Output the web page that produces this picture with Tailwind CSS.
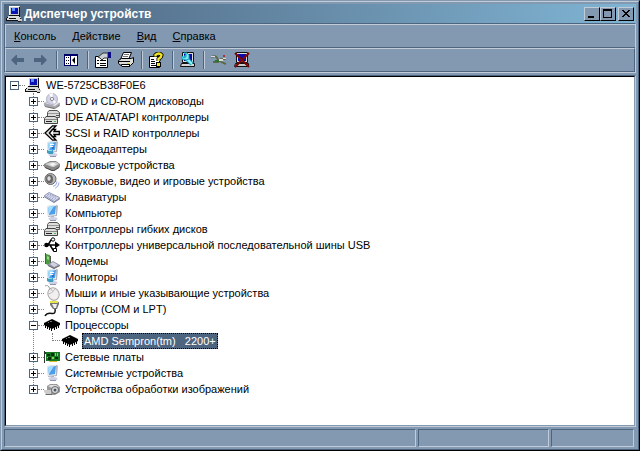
<!DOCTYPE html>
<html lang="ru">
<head>
  <meta charset="UTF-8">
  <title>Диспетчер устройств</title>
  <meta name="viewport" content="width=device-width, initial-scale=1">
  <script src="https://cdn.jsdelivr.net/npm/@tailwindcss/browser@4"></script>
</head>
<body class="font-['Liberation_Sans',Arial,sans-serif] text-[11px] text-black">

  <!-- Icon set -->
  <svg class="hidden" xmlns="http://www.w3.org/2000/svg">
    <symbol id="pc" viewBox="0 0 16 16">
      <path fill="#c6cbd0" d="M3 0h11v10H3z"/><path fill="#fff" d="M3 0h10v1H3zM3 0h1v9H3z"/><path fill="#111" d="M13 1h1v9H3V9h10z"/>
      <path fill="#0a12b4" d="M5 2h7v6H5z"/><path fill="#5c8cff" d="M6 2h3v3H6z"/>
      <path fill="#d8dcdf" d="M2 10h11v2H2zM1 12h12v2H1z"/><path fill="#111" d="M1 11h1v1H1zM0 12h1v3H0zM1 14h13v1H1zM3 12h7v1H3zM13 10h1v2h-1z"/>
      <path fill="#ccc" d="M12 11h3v2h1v2h-2v1h-2v-2h1z"/><path fill="#222" d="M14 12h1v1h-1zM12 15h3v1h-3z"/>
    </symbol>
    <symbol id="cd" viewBox="0 0 16 16">
      <path fill="#a8a8b0" d="M0 10l4-2 12 2v3l-5 3-11-3z"/><path fill="#e8e8ec" d="M1 10l4-1 10 1-4 3z"/><path fill="#777" d="M1 13l10 2 4-3v1l-5 3-9-2z"/>
      <ellipse cx="8" cy="6" rx="5.500" ry="5.500" fill="#d4d2e6" stroke="#b4b4c6"/><path fill="#fff" d="M8 6l-3-5 4-1zM8 6l2 5 2-2z"/><circle cx="8" cy="6" r="1.600" fill="#fff" stroke="#888"/>
    </symbol>
    <symbol id="drives" viewBox="0 0 16 16">
      <path fill="#ddd" stroke="#555" d="M5 1.500h8l2.500 2v5h-12v-5z"/><path fill="#999" d="M4 4h11v1H4z"/><path fill="#555" d="M12 6h3v1h-3z"/>
      <path fill="#ddd" stroke="#444" d="M2 7.500h9l2.500 2v5H.5v-5z"/><path fill="#888" d="M1 10h12v1H1z"/><path fill="#222" d="M2 12h6v1H2z"/><path fill="#3c3" d="M10 12h2v1h-2z"/>
    </symbol>
    <symbol id="scsi" viewBox="0 0 16 16">
      <path fill="#ddd" stroke="#000" stroke-width="1.300" d="M8.500.8h3.500L5.500 8l6.500 7.200H8.500L1 8z"/><path fill="#fff" stroke="#000" stroke-width="1.300" d="M15.300 6.500H10l1.500-2h-3L5.500 8l3 3.500h3l-1.500-2h5.300z"/>
    </symbol>
    <symbol id="monitor" viewBox="0 0 16 16">
      <path fill="#b4b8c4" d="M3 1l10-1 1 1-1 10-9 1z"/><path fill="#e9edf3" d="M3 1l9-1v10l-8 1z"/><path fill="#4a9eec" d="M4 2l8-1-1 8-6 1z"/><path fill="#a4defc" d="M4 2l6-1-5 8z"/>
      <path fill="#b0b5c6" d="M7 11h3v2H7z"/><ellipse cx="9" cy="13.800" rx="4.500" ry="1.700" fill="#cdd1e4"/><path fill="#9093b8" d="M6 15h6v1H6z"/>
    </symbol>
    <symbol id="video" viewBox="0 0 16 16">
      <use href="#monitor"/><path fill="#fff" d="M6 3h4v1H6zM6 5h3v1H6z"/><path fill="#2f6fc0" d="M8 6h2v2H8z"/><path fill="#3e9cc4" d="M3 9h6v4H5l-2-1z"/><path fill="#8fe0ee" d="M4 9h4v1H4z"/>
    </symbol>
    <symbol id="disk" viewBox="0 0 16 16">
      <path fill="#888" d="M0 7l6-3h6l4 3v3l-6 4H8L0 10z"/><path fill="#ccc" d="M1 7l6-2h5l3 2-5 3H8z"/><path fill="#f8f8f8" d="M5 7l4-1 3 1-3 2z"/><path fill="#444" d="M1 10l7 3h2l5-3v1l-5 3H8l-7-3z"/>
    </symbol>
    <symbol id="sound" viewBox="0 0 16 16">
      <ellipse cx="6.500" cy="6" rx="5.500" ry="5.500" fill="#b8b8b8" stroke="#666"/><ellipse cx="5.500" cy="6" rx="3.500" ry="4.300" fill="#666"/><ellipse cx="5" cy="5.500" rx="1.700" ry="2.300" fill="#ddd"/>
      <path fill="none" stroke="#9caae4" d="M9 13.500q4-1 4-5M11 15.500q4-2 4-6"/>
    </symbol>
    <symbol id="keyboard" viewBox="0 0 16 16">
      <path fill="#d9dcf0" stroke="#9698b6" d="M.5 6.500L5 3.500l10.500 5-5 4z"/><path fill="none" stroke="#8a8fb8" stroke-dasharray="1 1" d="M3 6l8 5M4 5l8 4.500M6 5l7 3.500"/><path fill="#666b91" d="M0 7l10 6 6-4v1l-6 4L0 8z"/>
    </symbol>
    <symbol id="usb" viewBox="0 0 16 16">
      <path fill="none" stroke="#000" stroke-width="1.500" d="M2 8h12M4 8l3-5h2M6 8l3 5h2"/><circle cx="2.500" cy="8" r="2.300" fill="#000"/><path d="M11 4.500L16 8l-5 3.500z"/><circle cx="9" cy="2.500" r="1.700" fill="#fff" stroke="#000"/><path fill="#fff" stroke="#000" d="M9.500 11.500h3v3h-3z"/>
    </symbol>
    <symbol id="modem" viewBox="0 0 16 16">
      <path fill="#4b9b3f" d="M2 1l4 1v11l-4-2z"/><path fill="#9bdd7a" d="M3 3l2 1v3L3 6z"/><path fill="#555" d="M1 0h1v11H1zM6 3h1v8H6z"/>
      <path fill="#9093a6" d="M3 12l6-4 7 4-6 4z"/><path fill="#d2d4e2" d="M6 11l3-2 5 3-4 2z"/><path fill="#666" d="M4 12l6 3 6-3v1l-6 3-6-3z"/>
    </symbol>
    <symbol id="mouse" viewBox="0 0 16 16">
      <path fill="none" stroke="#999" d="M1 1q3-2 5 3"/><ellipse cx="9.500" cy="9" rx="5.500" ry="6.300" fill="#f1f0ee" stroke="#aaa" transform="rotate(-25 9.500 9)"/><path fill="none" stroke="#bbb" d="M4 9q4 0 7-5M7 4l2 3"/>
    </symbol>
    <symbol id="port" viewBox="0 0 16 16">
      <path fill="#777" d="M6 1h9v2l-2 5H9L6 4z"/><path fill="#e6e64a" d="M6 0h8v2H6z"/><path fill="#eee" d="M8 3h5l-1 4h-2z"/><path fill="none" stroke="#111" stroke-width="1.500" d="M11 8q1 5-3 4.500-5-1-7 2.500"/>
    </symbol>
    <symbol id="chip" viewBox="0 0 16 16">
      <path d="M0 6l8-4 8 4v2l-8 4L0 8z"/><path fill="none" stroke="#000" d="M1.500 8v3M3.500 9v3M5.500 10v3M7.500 11v3M10.500 10v3M12.500 9v3M14.500 8v3"/><path fill="#777" d="M6 4h2v1H6zM4 5h1v1H4z"/>
    </symbol>
    <symbol id="netcard" viewBox="0 0 16 16">
      <path fill="#167a22" d="M2 3h14v9H2z"/><path fill="#333" d="M0 2h1v12H0zM1 3h1v2H1z"/><path fill="#092e0e" d="M3 5h3v2H3zM7 4h3v3H7zM4 8h3v3H4zM11 8h3v2h-3z"/><path fill="#7ed957" d="M11 4h1v3h-1zM13 4h1v3h-1zM8 8h2v2H8zM3 8h1v1H3z"/><path fill="#d7ba36" d="M5 12h8v1H5z"/>
    </symbol>
    <symbol id="camera" viewBox="0 0 16 16">
      <path fill="#999" d="M3 5l3-2h7l3 3v5l-5 3H7L3 10z"/><path fill="#e0e0e4" d="M4 5l3-1h5l3 2-5 2z"/><circle cx="11" cy="9" r="3.500" fill="#ddd" stroke="#666"/><circle cx="11" cy="9" r="1.500" fill="#456"/><path fill="#ccc" d="M0 9h7v4H2L0 11z"/><path fill="#666" d="M1 13h7v1H2z"/>
    </symbol>
  </svg>

  <main class="flex min-h-screen flex-col border border-t-[#8399b1] border-l-[#8399b1] border-r-black border-b-black bg-[#8399b1]">
    <div class="flex grow flex-col border border-t-[#c1ccd8] border-l-[#c1ccd8] border-r-[#4e657f] border-b-[#4e657f] p-0.5">

      <!-- Title bar -->
      <header class="flex h-[19px] items-center bg-linear-to-r from-[#4e657f] to-[#80b5d4] px-0.5">
        <svg class="size-4"><use href="#pc"/></svg>
        <h1 class="grow pl-0.5 text-[12px] leading-4 font-bold text-white">Диспетчер устройств</h1>
        <div class="flex">
          <button aria-label="Свернуть" class="h-3.5 w-4 border border-t-[#c1ccd8] border-l-[#c1ccd8] border-r-black border-b-black bg-[#8399b1]">
            <svg class="h-3 w-3.5" viewBox="0 0 14 12"><path d="M3 8h6v2H3z"/></svg>
          </button>
          <button aria-label="Развернуть" class="h-3.5 w-4 border border-t-[#c1ccd8] border-l-[#c1ccd8] border-r-black border-b-black bg-[#8399b1]">
            <svg class="h-3 w-3.5" viewBox="0 0 14 12" fill-rule="evenodd"><path d="M2 1h9v9H2zM3 3v6h7V3z"/></svg>
          </button>
          <button aria-label="Закрыть" class="ml-0.5 h-3.5 w-4 border border-t-[#c1ccd8] border-l-[#c1ccd8] border-r-black border-b-black bg-[#8399b1]">
            <svg class="h-3 w-3.5" viewBox="0 0 14 12" shape-rendering="crispEdges"><path d="M3 2h2v1h1v1h2V3h1V2h2v1h-1v1H9v1H8v1h1v1h1v1h1v1H9V8H8V7H6v1H5v1H3V8h1V7h1V6h1V5H5V4H4V3H3z"/></svg>
          </button>
        </div>
      </header>

      <div class="border border-[#4e657f] border-r-[#c1ccd8] border-b-[#c1ccd8]">
        <nav class="flex h-6 items-center gap-4 border-t border-b border-l border-t-[#c1ccd8] border-l-[#c1ccd8] border-b-[#4e657f] pl-2 leading-4">
          <button><u>К</u>онсоль</button>
          <button><u>Д</u>ействие</button>
          <button><u>В</u>ид</button>
          <button><u>С</u>правка</button>
        </nav>
        <div role="toolbar" class="flex h-6 items-center border border-t-[#c1ccd8] border-l-[#c1ccd8] border-r-[#4e657f] border-b-[#4e657f] pl-1">
          <button aria-label="Назад"><svg class="size-4" viewBox="0 0 16 16"><path fill="#4e657f" d="M1 8l5-5h1v3h7v4H7v3H6z"/></svg></button>
          <button aria-label="Вперед" class="ml-[7px]"><svg class="size-4" viewBox="0 0 16 16"><path fill="#4e657f" d="M14 8L9 3H8v3H1v4h7v3h1z"/></svg></button>
          <span class="mr-1.5 ml-[7px] h-[18px] w-0.5 border-l border-l-[#4e657f] bg-[#c1ccd8]"></span>
          <button aria-label="Дерево консоли"><svg class="size-4" viewBox="0 0 16 16"><path fill="#00006b" d="M0 2h14v12H0z"/><path fill="#fff" d="M1 4h5v9H1zM7 4h6v9H7z"/><path d="M2 5h1v1H2zM4 5h1v1H4zM2 8h1v1H2zM4 8h1v1H4zM2 11h1v1H2zM4 11h1v1H4zM8 8l3-3v7z"/></svg></button>
          <span class="mr-1.5 ml-[7px] h-[18px] w-0.5 border-l border-l-[#4e657f] bg-[#c1ccd8]"></span>
          <button aria-label="Свойства"><svg class="size-4" viewBox="0 0 16 16"><path fill="#fff" stroke="#000" d="M.5 4.500h12v11H.5z"/><path d="M2 8h2v1H2zM5 8h6v1H5zM2 11h2v1H2zM5 11h6v1H5zM5 13h6v1H5z"/><path fill="#c9ced2" stroke="#333" d="M3 5l5-4h5v5H9L7 8 5 6z"/><path fill="#0a0a87" d="M13 0h3v6h-3z"/></svg></button>
          <button aria-label="Печать" class="ml-[7px]"><svg class="size-4" viewBox="0 0 16 16"><path fill="#fff" stroke="#000" d="M5.500.5h8l-3 7h-8z"/><path fill="#777" d="M6 2h5v1H6zM5 4h5v1H5z"/><path fill="#ddd" stroke="#000" d="M.5 8.500l3-2h10l2-1v5l-3 3H3l-2.500-2z"/><path d="M1 9h11v1H1zM3 12h9v3H4z"/><path fill="#fff" d="M4 13h7v1H4z"/><path fill="#d5d52b" d="M9 11h2v1H9z"/></svg></button>
          <span class="mr-1.5 ml-[7px] h-[18px] w-0.5 border-l border-l-[#4e657f] bg-[#c1ccd8]"></span>
          <button aria-label="Справка"><svg class="size-4" viewBox="0 0 16 16"><path fill="#fff" stroke="#000" d="M.5 4.500h10v11H.5z"/><path d="M2 7h3v1H2zM2 9h4v1H2zM2 11h4v1H2zM2 13h5v1H2z"/><path fill="none" stroke="#000" stroke-width="4" d="M6.500 5V3q3.500-3 6 0 0 2-3 4v2"/><path d="M7 10h5v5H7z"/><path fill="none" stroke="#f2e527" stroke-width="2.400" d="M6.500 4.500V3q3.500-3 6 0 0 2-3 4v2"/><path fill="#f2e527" d="M8 11h3v3H8z"/></svg></button>
          <span class="mr-1.5 ml-[7px] h-[18px] w-0.5 border-l border-l-[#4e657f] bg-[#c1ccd8]"></span>
          <button aria-label="Обновить конфигурацию"><svg class="size-4" viewBox="0 0 16 16"><path fill="#ddd" stroke="#111" d="M2.500.5h11v10h-11z"/><path fill="#0808a0" d="M4 2h8v7H4z"/><path fill="#d7d7d7" stroke="#111" d="M1.500 11.500h13v3H.5z"/><path fill="none" stroke="#18a3bd" stroke-width="4" d="M4 4l8 8"/><path fill="none" stroke="#8bf2ff" stroke-width="2" d="M5 5l7 7"/><path fill="#7ceaf5" stroke="#18a3bd" d="M2 4l2 2 2-1V2L4 1h3l2 2v4L6 8 2 7z"/></svg></button>
          <span class="mr-1.5 ml-[7px] h-[18px] w-0.5 border-l border-l-[#4e657f] bg-[#c1ccd8]"></span>
          <button aria-label="Отключить"><svg class="size-4" viewBox="0 0 16 16"><path fill="none" stroke="#5d6a4b" stroke-width="2" d="M0 5q5-2 6 1t9 6M2 10h5l3-3h5"/><path fill="#ddd" d="M0 4h4v1H0zM8 7h4v2H8zM12 6h3v1h-3z"/><path fill="#28742c" d="M4 8h4v2H4z"/><path fill="#a33" d="M12 3h2v2h-2z"/></svg></button>
          <button aria-label="Удалить" class="ml-[7px]"><svg class="size-4" viewBox="0 0 16 16"><path fill="#ddd" stroke="#111" d="M2.500.5h11v10h-11z"/><path fill="#0a0aaf" d="M4 2h8v7H4z"/><path fill="#ccc" stroke="#111" d="M1.500 11.500h13v3H.5z"/><path stroke="#7b0606" stroke-width="2" d="M1 1l14 14M15 1L1 15"/></svg></button>
        </div>
      </div>

      <!-- Device tree -->
      <div class="mt-0.5 flex grow flex-col border border-t-[#4e657f] border-l-[#4e657f] border-r-[#c1ccd8] border-b-[#c1ccd8]">
        <div class="grow border border-t-black border-l-black border-r-[#8399b1] border-b-[#8399b1] bg-white pl-1">
          <div class="flex h-4 items-center">
            <button aria-label="Свернуть" class="flex size-[9px] items-center justify-center border border-[#4e657f] bg-white"><span class="h-px w-[5px] bg-black"></span></button>
            <span class="w-1.5 border-t border-dotted border-[#808080]"></span>
            <svg class="size-4"><use href="#pc"/></svg>
            <span class="pl-[5px] whitespace-pre">WE-5725CB38F0E6</span>
          </div>
          <ul id="tree" class="relative ml-[19px]">
            <li class="absolute top-0 bottom-2 left-1 border-l border-dotted border-[#808080]" role="presentation"></li>
          </ul>
        </div>
      </div>

      <footer class="mt-0.5 flex h-[18px] gap-0.5 pr-0.5">
        <div class="grow border border-t-[#4e657f] border-l-[#4e657f] border-r-[#c1ccd8] border-b-[#c1ccd8]"></div>
        <div class="w-[131px] border border-t-[#4e657f] border-l-[#4e657f] border-r-[#c1ccd8] border-b-[#c1ccd8]"></div>
        <div class="w-[83px] border border-t-[#4e657f] border-l-[#4e657f] border-r-[#c1ccd8] border-b-[#c1ccd8]"></div>
      </footer>
    </div>
  </main>

  <script>
    const devices = [
      ['cd', 'DVD и CD-ROM дисководы'],
      ['drives', 'IDE ATA/ATAPI контроллеры'],
      ['scsi', 'SCSI и RAID контроллеры'],
      ['video', 'Видеоадаптеры'],
      ['disk', 'Дисковые устройства'],
      ['sound', 'Звуковые, видео и игровые устройства'],
      ['keyboard', 'Клавиатуры'],
      ['monitor', 'Компьютер'],
      ['drives', 'Контроллеры гибких дисков'],
      ['usb', 'Контроллеры универсальной последовательной шины USB'],
      ['modem', 'Модемы'],
      ['video', 'Мониторы'],
      ['mouse', 'Мыши и иные указывающие устройства'],
      ['port', 'Порты (COM и LPT)'],
      ['chip', 'Процессоры', 'AMD Sempron(tm)   2200+'],
      ['netcard', 'Сетевые платы'],
      ['monitor', 'Системные устройства'],
      ['camera', 'Устройства обработки изображений'],
    ];

    const tree = document.getElementById('tree');

    devices.forEach(([icon, name, child]) => {
      const li = document.createElement('li');
      li.className = 'relative';
      li.innerHTML = `
        <div class="flex h-4 items-center">
          <button aria-label="${name}" class="relative flex size-[9px] items-center justify-center border border-[#4e657f] bg-white">
            <span class="h-px w-[5px] bg-black"></span>
            ${child ? '' : '<span class="absolute h-[5px] w-px bg-black"></span>'}
          </button>
          <span class="w-1.5 border-t border-dotted border-[#808080]"></span>
          <svg class="size-4"><use href="#${icon}"/></svg>
          <span class="pl-[5px] whitespace-pre">${name}</span>
        </div>
        ${child ? `
        <div class="flex h-4 items-center pl-[23px]">
          <span class="h-2 w-2.5 self-start border-b border-l border-dotted border-[#808080]"></span>
          <svg class="size-4"><use href="#${icon}"/></svg>
          <span class="ml-1 h-4 border border-dotted border-black bg-[#4e657f] px-px leading-[14px] whitespace-pre text-white">${child}</span>
        </div>` : ''}`;
      tree.appendChild(li);
    });
  </script>
</body>
</html>
